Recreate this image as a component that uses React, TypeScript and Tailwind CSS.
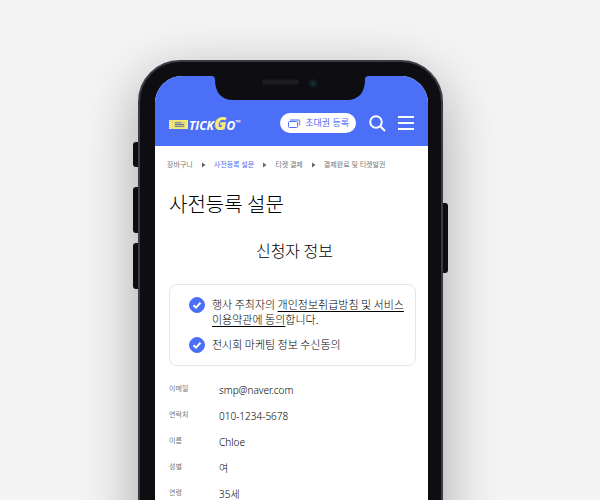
import React from "react";

const steps = ["장바구니", "사전등록 설문", "티켓 결제", "결제완료 및 티켓발권"];

const details = [
  { label: "이메일", value: "smp@naver.com" },
  { label: "연락처", value: "010-1234-5678" },
  { label: "이름", value: "Chloe" },
  { label: "성별", value: "여" },
  { label: "연령", value: "35세" },
];

function Notch() {
  return (
    <svg
      aria-hidden="true"
      className="absolute top-0 left-14"
      width="158"
      height="24"
      viewBox="0 0 158 24"
    >
      <path
        d="M0 0H158C155 0 154 1 154 4C154 17 147 24 136 24H22C11 24 4 17 4 4C4 1 3 0 0 0Z"
        fill="#0e0e12"
      />
      <rect x="51" y="3.500" width="37" height="5" rx="2.500" fill="#1c1c21" />
      <circle cx="102" cy="7.500" r="4.500" fill="#16191d" />
      <circle cx="102" cy="7.500" r="2" fill="#0d333c" />
    </svg>
  );
}

function Logo() {
  return (
    <a href="#home" aria-label="TickGo" className="mt-0.5 flex h-5 items-center text-white">
      <svg width="19" height="9" viewBox="0 0 19 9" aria-hidden="true">
        <rect width="19" height="9" fill="#f8ea72" />
        <path d="M1 1v7M3.500 0v9" stroke="#b9b584" strokeWidth="0.700" strokeDasharray="1 1" />
        <rect x="5" y="1.500" width="11" height="6" fill="#d9d37c" />
        <path d="M6 2.800h6M6 4.500h9M6 6.300h9" stroke="#5167a8" strokeWidth="0.800" />
      </svg>
      <span className="flex items-baseline pl-px font-['Open_Sans',sans-serif] text-[12px] leading-5 font-bold italic">
        TICK
        <span className="text-[18px] leading-5 font-extrabold text-[#f8ea72]">G</span>
        O<span className="self-start text-[7px] leading-5">™</span>
      </span>
    </a>
  );
}

function Header() {
  return (
    <header className="flex h-[70px] items-end bg-[#4c6ff8] pr-[14px] pb-[13px] pl-[14px]">
      <div className="flex h-5 flex-1 items-center">
        <Logo />
        <button
          type="button"
          className="ml-auto flex h-5 items-center gap-1 rounded-full bg-white pr-[7px] pl-2 text-[9px] whitespace-nowrap text-[#4c6ff8]"
        >
          <svg width="13" height="9" viewBox="0 0 13 9" fill="none" stroke="#4c6ff8" aria-hidden="true">
            <rect x="0.500" y="2.500" width="9" height="6" rx="1" />
            <path d="M2 1h8.500a1 1 0 0 1 1 1v4.500" strokeOpacity="0.700" strokeWidth="1.400" />
          </svg>
          초대권 등록
        </button>
        <button type="button" aria-label="검색" className="ml-[13px]">
          <svg width="17" height="17" viewBox="0 0 17 17" fill="none" stroke="white" strokeWidth="2">
            <circle cx="7" cy="7" r="5.800" />
            <path d="M11.200 11.200L16 16" />
          </svg>
        </button>
        <button type="button" aria-label="메뉴" className="ml-3">
          <svg width="16" height="14" viewBox="0 0 16 14" fill="white">
            <path d="M0 0h16v2H0zM0 6h16v2H0zM0 12h16v2H0z" />
          </svg>
        </button>
      </div>
    </header>
  );
}

function Breadcrumb() {
  return (
    <nav aria-label="진행 단계" className="pt-[14px] pl-3">
      <ol className="flex gap-[9px] text-[7px] leading-[10px] whitespace-nowrap text-[#777]">
        {steps.map((step, i) => (
          <li key={step} className="flex items-center gap-2">
            {i > 0 && (
              <svg width="4" height="6" viewBox="0 0 4 6" fill="#666" aria-hidden="true">
                <path d="M0 0.500L3.500 3L0 5.500Z" />
              </svg>
            )}
            <span
              aria-current={i === 1 ? "step" : undefined}
              className={i === 1 ? "text-[#4c6ff8]" : undefined}
            >
              {step}
            </span>
          </li>
        ))}
      </ol>
    </nav>
  );
}

function Consent({ id, children }: { id: string; children: React.ReactNode }) {
  return (
    <div className="flex items-start gap-[7px]">
      <span className="grid shrink-0">
        <input
          id={id}
          type="checkbox"
          defaultChecked
          className="peer col-start-1 row-start-1 size-4 appearance-none rounded-full border border-[#4c6ff8] checked:bg-[#4c6ff8]"
        />
        <svg
          className="pointer-events-none invisible col-start-1 row-start-1 peer-checked:visible"
          width="16"
          height="16"
          viewBox="0 0 16 16"
          fill="none"
          stroke="white"
          strokeWidth="2"
          aria-hidden="true"
        >
          <path d="M4.500 8.300L7 10.600L11.500 5.800" />
        </svg>
      </span>
      <label
        htmlFor={id}
        className="font-['Noto_Sans_CJK_KR',sans-serif] text-[11px] leading-[15px] text-black"
      >
        {children}
      </label>
    </div>
  );
}

export default function App() {
  return (
    <div className="flex h-screen justify-center overflow-hidden bg-[#f4f4f4] pt-[60px] pr-[19px] font-['Noto_Sans','Noto_Sans_CJK_KR',sans-serif]">
      <div className="relative h-[620px] w-[305px] shrink-0 rounded-[42px] border-2 border-[#3a3b45] bg-[#0e0e12] pt-[14px] pr-[13px] pl-[15px] shadow-[0_16px_56px_rgba(0,0,0,0.32)]">
        <span className="absolute top-20 -left-[7px] h-[25px] w-[5px] rounded-l-[3px] bg-[#0e0e12]" />
        <span className="absolute top-[125px] -left-[7px] h-[46px] w-[5px] rounded-l-[3px] bg-[#0e0e12]" />
        <span className="absolute top-[181px] -left-[7px] h-[46px] w-[5px] rounded-l-[3px] bg-[#0e0e12]" />
        <span className="absolute top-[141px] -right-[7px] h-[70px] w-[5px] rounded-r-[3px] bg-[#0e0e12]" />

        <div className="relative h-full overflow-hidden rounded-t-[27px] bg-white">
          <Header />
          <Notch />
          <Breadcrumb />
          <main className="pr-3 pl-[14px] font-light text-black">
            <h1 className="pt-[19px] font-['Noto_Sans_CJK_KR',sans-serif] text-[20px] leading-[30px]">
              사전등록 설문
            </h1>
            <h2 className="pt-[19px] pl-1 text-center font-['Noto_Sans_CJK_KR',sans-serif] text-[16px] leading-6">
              신청자 정보
            </h2>

            <section className="mt-[22px] flex flex-col gap-[10px] rounded-lg border border-[#e6e6e6] py-3 pr-1 pl-[19px]">
              <Consent id="terms">
                행사 주최자의{" "}
                <a href="#terms-text" className="underline decoration-1 underline-offset-2">
                  개인정보취급방침 및 서비스
                  <br />
                  이용약관에 동의
                </a>
                합니다.
              </Consent>
              <Consent id="marketing">전시회 마케팅 정보 수신동의</Consent>
            </section>

            <dl className="pt-[11px]">
              {details.map(({ label, value }) => (
                <div key={label} className="flex h-[26px] items-center">
                  <dt className="w-[50px] pb-0.5 text-[7px] font-normal text-[#777]">{label}</dt>
                  <dd className="text-[10px]">{value}</dd>
                </div>
              ))}
            </dl>
          </main>
        </div>
      </div>
    </div>
  );
}
